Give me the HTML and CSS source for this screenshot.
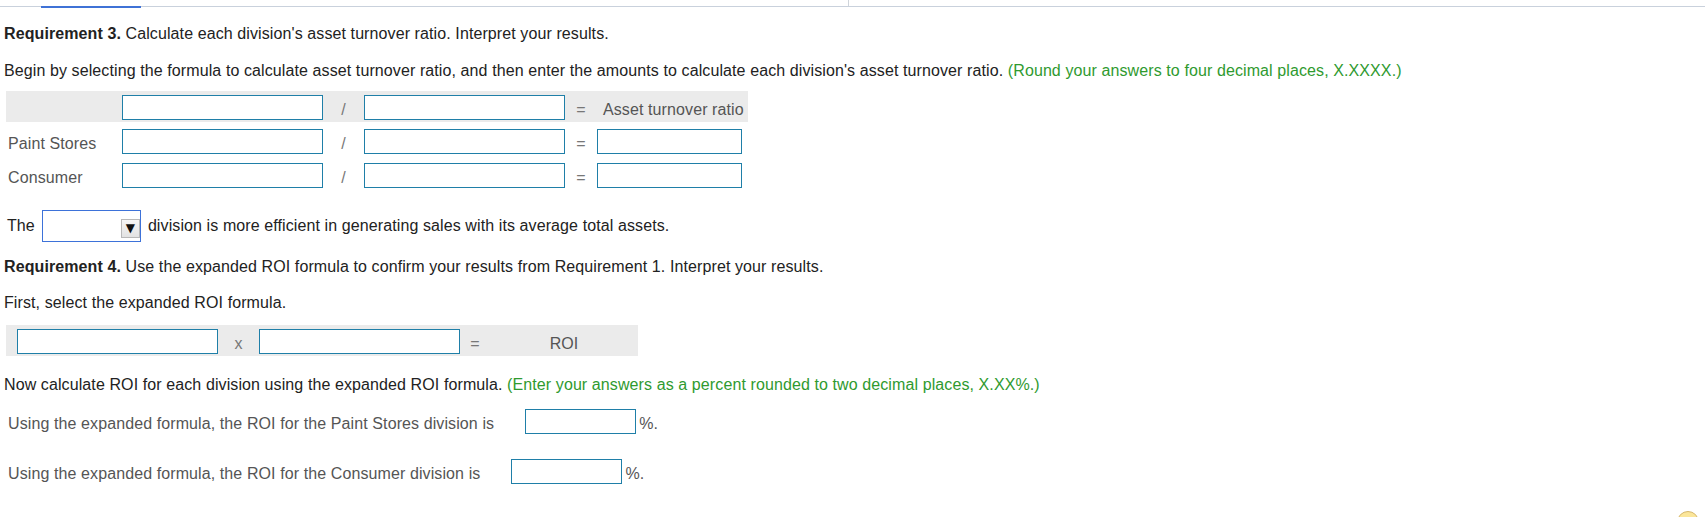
FILE: index.html
```html
<!DOCTYPE html>
<html>
<head>
<meta charset="utf-8">
<link rel="stylesheet" href="styles.css">
</head>
<body>
<div class="topbar">
  <div class="tab"></div>
  <div class="vline"></div>
</div>
<main class="page">
  <p class="req3"><b>Requirement 3.</b> Calculate each division's asset turnover ratio. Interpret your results.</p>
  <p class="begin">Begin by selecting the formula to calculate asset turnover ratio, and then enter the amounts to calculate each division's asset turnover ratio. <span class="hint">(Round your answers to four decimal places, X.XXXX.)</span></p>

  <div class="ratio-table">
    <div class="trow head">
      <span class="lbl"></span>
      <input class="box w201" type="text">
      <span class="op">/</span>
      <input class="box w201" type="text">
      <span class="op">=</span>
      <span class="res-lbl">Asset turnover ratio</span>
    </div>
    <div class="trow r2">
      <span class="lbl">Paint Stores</span>
      <input class="box w201" type="text">
      <span class="op">/</span>
      <input class="box w201" type="text">
      <span class="op">=</span>
      <input class="box w145" type="text">
    </div>
    <div class="trow r3">
      <span class="lbl">Consumer</span>
      <input class="box w201" type="text">
      <span class="op">/</span>
      <input class="box w201" type="text">
      <span class="op">=</span>
      <input class="box w145" type="text">
    </div>
  </div>

  <div class="select-line">
    <span>The</span>
    <div class="select"><span class="arrow">&#9660;</span></div>
    <span>division is more efficient in generating sales with its average total assets.</span>
  </div>

  <p class="req4"><b>Requirement 4.</b> Use the expanded ROI formula to confirm your results from Requirement 1. Interpret your results.</p>
  <p class="first">First, select the expanded ROI formula.</p>

  <div class="roi-row">
    <input class="box w201" type="text">
    <span class="op">x</span>
    <input class="box w201" type="text">
    <span class="op">=</span>
    <span class="roi-lbl">ROI</span>
  </div>

  <p class="now">Now calculate ROI for each division using the expanded ROI formula. <span class="hint">(Enter your answers as a percent rounded to two decimal places, X.XX%.)</span></p>

  <div class="pct-line paint">
    <span class="pct-text">Using the expanded formula, the ROI for the Paint Stores division is</span>
    <input class="box w111" type="text">
    <span class="pct-sign">%.</span>
  </div>
  <div class="pct-line consumer">
    <span class="pct-text">Using the expanded formula, the ROI for the Consumer division is</span>
    <input class="box w111" type="text">
    <span class="pct-sign">%.</span>
  </div>
</main>
<div class="help-bubble"></div>
</body>
</html>
```
FILE: styles.css
```css
html, body {
  margin: 0;
  padding: 0;
  background: #ffffff;
  overflow: hidden;
}
body {
  font-family: "Liberation Sans", Arial, sans-serif;
  font-size: 16px;
  letter-spacing: 0.1px;
  color: #222222;
  line-height: 18px;
}
.topbar {
  display: flex;
  align-items: stretch;
  height: 6px;
  border-bottom: 1px solid #c9d1dc;
}
.tab {
  margin-left: 41px;
  width: 100px;
  align-self: flex-end;
  height: 2px;
  margin-bottom: -2px;
  background: #3f72d6;
}
.vline {
  margin-left: 707px;
  width: 1px;
  background: #cfd4da;
}
.page {
  padding: 0 4px;
}
p {
  margin: 0;
}
.req3 { margin-top: 18px; }
.begin { margin-top: 19px; }
.hint { color: #2f9a2f; }

.box {
  box-sizing: border-box;
  height: 25px;
  margin: 0;
  padding: 0 4px;
  border: 1px solid #1f7fa8;
  border-radius: 0;
  background: #ffffff;
  font: inherit;
  outline: none;
}
.w201 { width: 201px; }
.w145 { width: 145px; }
.w111 { width: 111px; }

.ratio-table {
  margin-top: 11px;
  margin-left: 2px;
  width: 742px;
}
.trow {
  display: grid;
  grid-template-columns: 116px 201px 41px 201px 32px 145px;
  align-items: end;
  padding-right: 6px;
}
.trow.head {
  background: #ebebeb;
  padding-top: 4px;
  padding-bottom: 2px;
  height: 31px;
  box-sizing: border-box;
}
.trow.r2 { margin-top: 7px; }
.trow.r3 { margin-top: 9px; }
.lbl {
  color: #555555;
  padding-left: 2px;
  margin-bottom: 1px;
}
.op {
  color: #777777;
  text-align: center;
  margin-bottom: 1px;
}
.res-lbl {
  color: #555555;
  padding-left: 6px;
  margin-bottom: 1px;
  white-space: nowrap;
}

.select-line {
  display: flex;
  align-items: center;
  gap: 7px;
  margin-top: 22px;
  padding-left: 3px;
}
.select {
  box-sizing: border-box;
  width: 99px;
  height: 32px;
  border: 1px solid #3d72d9;
  display: flex;
  justify-content: flex-end;
  align-items: flex-end;
  padding: 0 0 3px 0;
}
.arrow {
  box-sizing: border-box;
  width: 19px;
  height: 19px;
  border: 1px solid #b8b8b8;
  background: linear-gradient(#f6f6f6, #e2e2e2);
  color: #111111;
  font-family: "DejaVu Sans", sans-serif;
  font-size: 12px;
  letter-spacing: 0;
  line-height: 17px;
  text-align: center;
}

.req4 { margin-top: 16px; }
.first { margin-top: 18px; }

.roi-row {
  display: grid;
  grid-template-columns: 201px 41px 201px 30px 148px;
  align-items: end;
  box-sizing: border-box;
  width: 632px;
  height: 31px;
  margin-top: 13px;
  margin-left: 2px;
  padding: 4px 0 2px 11px;
  background: #ebebeb;
}
.roi-lbl {
  color: #555555;
  text-align: center;
  margin-bottom: 1px;
}

.now { margin-top: 20px; }

.pct-line {
  display: flex;
  align-items: flex-end;
  padding-left: 4px;
}
.pct-line.paint { margin-top: 15px; }
.pct-line.consumer { margin-top: 25px; }
.pct-text {
  color: #555555;
  margin-right: 31px;
  margin-bottom: 1px;
}
.pct-sign {
  color: #555555;
  margin-left: 3px;
  margin-bottom: 1px;
}

.help-bubble {
  position: fixed;
  left: 1677px;
  top: 511px;
  width: 22px;
  height: 22px;
  box-sizing: border-box;
  border-radius: 50%;
  border: 1px solid #d6b76c;
  background: #fbe69a;
}
```
